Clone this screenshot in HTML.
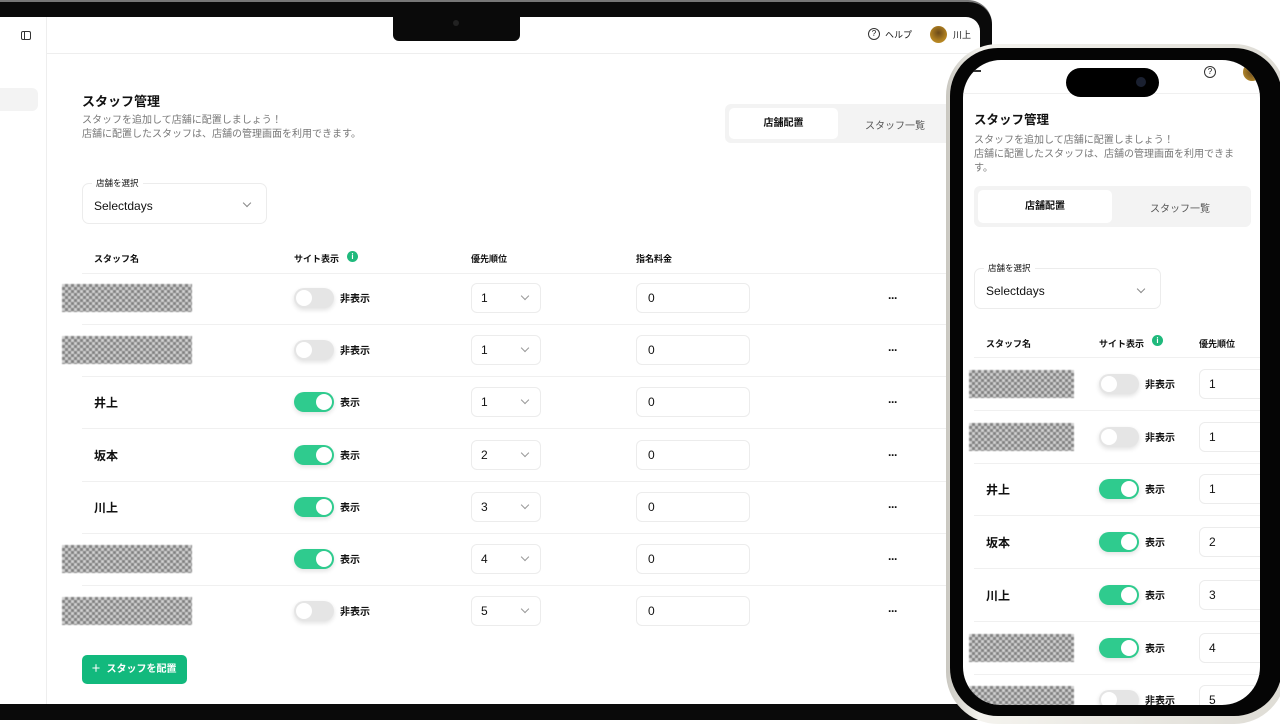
<!DOCTYPE html>
<html><head><meta charset="utf-8"><style>
*{box-sizing:border-box;margin:0;padding:0}
body{width:1280px;height:720px;overflow:hidden;background:#fff;position:relative;font-family:"Liberation Sans","Noto Sans CJK JP",sans-serif;color:#111}
.abs{position:absolute}
.blur{position:absolute;background:
repeating-conic-gradient(#6b6b6b 0 25%,#c9c9c9 0 50%) 0 0/6px 6px,#999;opacity:.85;filter:blur(.6px)}
.tog{position:absolute;width:40px;height:20px;border-radius:10px;background:#e5e5e5;box-shadow:0 2px 5px rgba(0,0,0,.12)}
.tog::after{content:"";position:absolute;left:2px;top:2px;width:16px;height:16px;border-radius:50%;background:#fff}
.tog.on{background:#2fcb8e}.tog.on::after{left:22px}
.lbl{position:absolute;font-size:10px;font-weight:bold}
.sel{position:absolute;width:70px;height:30px;border:1px solid #ececec;border-radius:6px;font-size:12px;padding:7px 0 0 9px}
.chev{position:absolute;right:12px;top:9px;width:6px;height:6px;border-right:1px solid #999;border-bottom:1px solid #999;transform:rotate(45deg)}
.inp{position:absolute;width:114px;height:30px;border:1px solid #ececec;border-radius:6px;font-size:12px;padding:7px 0 0 11px}
.line{position:absolute;height:1px;background:#f0f0f0}
.nm{position:absolute;font-size:12px;font-weight:bold}
.th{position:absolute;font-size:9px;font-weight:bold}
.dots{position:absolute;font-size:12px;font-weight:bold;letter-spacing:-1px}
</style></head><body>
<!-- laptop -->
<div class="abs" style="left:-20px;top:0;width:1012px;height:720px;background:#0a0a0a;border-radius:0 24px 0 0;border-top:2px solid #777"></div>
<div class="abs" style="left:0;top:17px;width:980px;height:687px;background:#fff;border-radius:0 14px 0 0;overflow:hidden">
 <div class="abs" style="left:0;top:0;width:47px;height:687px;border-right:1px solid #eee"></div>
 <div class="abs" style="left:0;top:71px;width:38px;height:23px;background:#f3f3f3;border-radius:0 6px 6px 0"></div>
 <div class="abs" style="left:21px;top:14px;width:10px;height:9px;border:1.3px solid #333;border-radius:2px"></div>
 <div class="abs" style="left:24px;top:14px;width:1.3px;height:9px;background:#333"></div>
 <div class="abs" style="left:47px;top:36px;width:933px;height:1px;background:#eee"></div>
 <div class="abs" style="left:868px;top:11px;width:12px;height:12px;border:1.2px solid #333;border-radius:50%;font-size:8px;text-align:center;line-height:10px">?</div>
 <div class="abs" style="left:885px;top:11px;font-size:9px">ヘルプ</div>
 <div class="abs" style="left:930px;top:9px;width:17px;height:17px;border-radius:50%;background:radial-gradient(circle at 50% 40%,#6b4a1a,#b08020 60%,#c89a30)"></div>
 <div class="abs" style="left:953px;top:11px;font-size:9px">川上</div>
 <div class="abs" style="left:82px;top:74px;font-size:13px;font-weight:bold">スタッフ管理</div>
 <div class="abs" style="left:82px;top:97px;font-size:10px;color:#777;line-height:14px">スタッフを追加して店舗に配置しましょう！<br>店舗に配置したスタッフは、店舗の管理画面を利用できます。</div>
 <div class="abs" style="left:725px;top:87px;width:240px;height:39px;background:#f3f3f3;border-radius:6px"></div>
 <div class="abs" style="left:729px;top:91px;width:109px;height:31px;background:#fff;border-radius:5px;font-size:10px;font-weight:bold;text-align:center;line-height:31px">店舗配置</div>
 <div class="abs" style="left:865px;top:100px;font-size:10px;color:#555">スタッフ一覧</div>
 <div class="abs" style="left:82px;top:166px;width:185px;height:41px;border:1px solid #ececec;border-radius:7px"></div>
 <div class="abs" style="left:92px;top:160px;font-size:8.5px;background:#fff;padding:0 4px">店舗を選択</div>
 <div class="abs" style="left:94px;top:182px;font-size:12px">Selectdays</div>
 <div class="abs" style="left:244px;top:183px;width:6px;height:6px;border-right:1px solid #888;border-bottom:1px solid #888;transform:rotate(45deg)"></div>
 <div class="th" style="left:94px;top:235px">スタッフ名</div>
 <div class="th" style="left:294px;top:235px">サイト表示</div>
 <div class="abs" style="left:347px;top:234px;width:11px;height:11px;border-radius:50%;background:#1fb97c;color:#fff;font-size:8px;font-weight:bold;text-align:center;line-height:11px">i</div>
 <div class="th" style="left:471px;top:235px">優先順位</div>
 <div class="th" style="left:636px;top:235px">指名料金</div>
 <div class="line" style="left:82px;top:256px;width:898px"></div>
 <div id="rows"></div>
 <div class="abs" style="left:82px;top:638px;width:105px;height:29px;background:#12b97d;border-radius:5px;color:#fff;font-size:10px;font-weight:bold;line-height:29px;padding-left:9px">＋&nbsp; スタッフを配置</div>
</div>
<div class="abs" style="left:393px;top:15px;width:127px;height:26px;background:#0a0a0a;border-radius:0 0 6px 6px"></div>
<div class="abs" style="left:453px;top:20px;width:6px;height:6px;border-radius:50%;background:#222"></div>

<!-- phone -->
<div class="abs" style="left:946px;top:44px;width:340px;height:680px;border-radius:52px;background:linear-gradient(90deg,#c9c7c0,#f4f3ee 10%,#dedcd5);"></div>
<div class="abs" style="left:950px;top:48px;width:332px;height:668px;border-radius:48px;background:#050505"></div>
<div class="abs" style="left:963px;top:60px;width:297px;height:645px;border-radius:38px;background:#fff;overflow:hidden">
 <div class="abs" style="left:6px;top:10px;width:12px;height:1.5px;background:#333"></div>
 <div class="abs" style="left:241px;top:6px;width:12px;height:12px;border:1.2px solid #333;border-radius:50%;font-size:8px;text-align:center;line-height:10px">?</div>
 <div class="abs" style="left:280px;top:3px;width:18px;height:18px;border-radius:50%;background:radial-gradient(circle,#6b4a1a,#c89a30)"></div>
 <div class="abs" style="left:0;top:33px;width:297px;height:1px;background:#f0f0f0"></div>
 <div class="abs" style="left:11px;top:49px;font-size:12.5px;font-weight:bold">スタッフ管理</div>
 <div class="abs" style="left:11px;top:74px;font-size:10px;color:#777;line-height:14px;width:272px">スタッフを追加して店舗に配置しましょう！<br>店舗に配置したスタッフは、店舗の管理画面を利用できます。</div>
 <div class="abs" style="left:11px;top:126px;width:277px;height:41px;background:#f3f3f3;border-radius:6px"></div>
 <div class="abs" style="left:15px;top:130px;width:134px;height:33px;background:#fff;border-radius:5px;font-size:10px;font-weight:bold;text-align:center;line-height:33px">店舗配置</div>
 <div class="abs" style="left:187px;top:140px;font-size:10px;color:#555">スタッフ一覧</div>
 <div class="abs" style="left:11px;top:208px;width:187px;height:41px;border:1px solid #ececec;border-radius:7px"></div>
 <div class="abs" style="left:21px;top:202px;font-size:8.5px;background:#fff;padding:0 4px">店舗を選択</div>
 <div class="abs" style="left:23px;top:224px;font-size:12px">Selectdays</div>
 <div class="abs" style="left:175px;top:226px;width:6px;height:6px;border-right:1px solid #888;border-bottom:1px solid #888;transform:rotate(45deg)"></div>
 <div class="th" style="left:23px;top:277px">スタッフ名</div>
 <div class="th" style="left:136px;top:277px">サイト表示</div>
 <div class="abs" style="left:189px;top:275px;width:11px;height:11px;border-radius:50%;background:#1fb97c;color:#fff;font-size:8px;font-weight:bold;text-align:center;line-height:11px">i</div>
 <div class="th" style="left:236px;top:277px">優先順位</div>
 <div class="line" style="left:11px;top:297px;width:290px"></div>
 <div id="prows"></div>
</div>
<div class="abs" style="left:1066px;top:68px;width:93px;height:29px;border-radius:15px;background:#000"></div>
<div class="abs" style="left:1136px;top:77px;width:10px;height:10px;border-radius:50%;background:#1a2030"></div>

<script>
var rows=[['',0,1],['',0,1],['井上',1,1],['坂本',1,2],['川上',1,3],['',1,4],['',0,5]];
var h='',p='';
rows.forEach(function(r,i){
 var c=281+i*52.2;
 if(r[0])h+='<div class="nm" style="left:94px;top:'+(c-8)+'px">'+r[0]+'</div>';
 else h+='<div class="blur" style="left:62px;top:'+(c-14)+'px;width:130px;height:28px"></div>';
 h+='<div class="tog'+(r[1]?' on':'')+'" style="left:294px;top:'+(c-10)+'px"></div>';
 h+='<div class="lbl" style="left:340px;top:'+(c-8)+'px">'+(r[1]?'表示':'非表示')+'</div>';
 h+='<div class="sel" style="left:471px;top:'+(c-15)+'px">'+r[2]+'<div class="chev"></div></div>';
 h+='<div class="inp" style="left:636px;top:'+(c-15)+'px">0</div>';
 h+='<div class="dots" style="left:888px;top:'+(c-7)+'px">···</div>';
 if(i<6)h+='<div class="line" style="left:82px;top:'+(c+26)+'px;width:898px"></div>';
 var q=324+i*52.7;
 if(r[0])p+='<div class="nm" style="left:23px;top:'+(q-8)+'px">'+r[0]+'</div>';
 else p+='<div class="blur" style="left:6px;top:'+(q-14)+'px;width:105px;height:28px"></div>';
 p+='<div class="tog'+(r[1]?' on':'')+'" style="left:136px;top:'+(q-10)+'px"></div>';
 p+='<div class="lbl" style="left:182px;top:'+(q-8)+'px">'+(r[1]?'表示':'非表示')+'</div>';
 p+='<div class="sel" style="left:236px;top:'+(q-15)+'px">'+r[2]+'<div class="chev" style="right:-2px"></div></div>';
 if(i<6)p+='<div class="line" style="left:11px;top:'+(q+26)+'px;width:290px"></div>';
});
document.getElementById('rows').outerHTML=h;
document.getElementById('prows').outerHTML=p;
</script>
</body></html>
